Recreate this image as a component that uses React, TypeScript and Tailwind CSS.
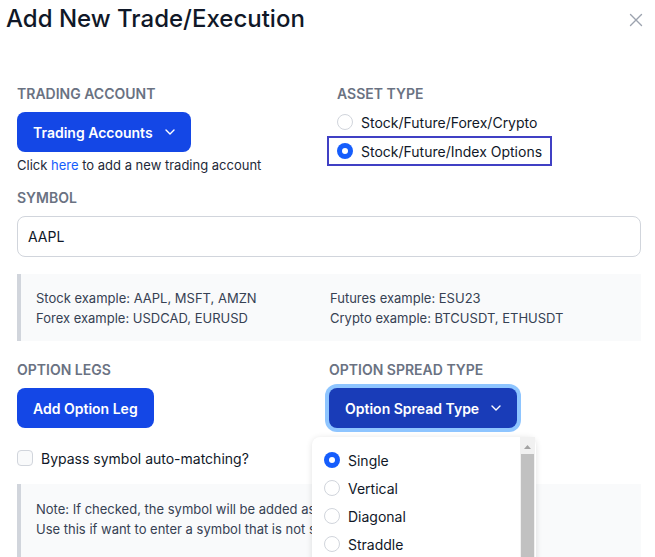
import type { ReactNode } from "react";

function Radio({ checked = false }: { checked?: boolean }) {
  return checked ? (
    <span className="flex h-4 w-4 shrink-0 items-center justify-center rounded-full bg-blue-600">
      <span className="h-[6px] w-[6px] rounded-full bg-white" />
    </span>
  ) : (
    <span className="h-4 w-4 shrink-0 rounded-full border border-gray-300 bg-white" />
  );
}

function Chevron() {
  return (
    <svg width="10" height="6" viewBox="0 0 10 6" fill="none" className="ml-3">
      <path d="M1 1l4 4 4-4" stroke="white" strokeWidth="1.4" strokeLinecap="round" strokeLinejoin="round" />
    </svg>
  );
}

function Label({ children }: { children: ReactNode }) {
  return <p className="text-[14px] font-semibold leading-5 text-gray-500">{children}</p>;
}

const spreads = ["Single", "Vertical", "Diagonal", "Straddle"];

export default function App() {
  return (
    <div
      className="relative h-[557px] w-[655px] overflow-hidden bg-white"
      style={{ fontFamily: "Inter, 'Liberation Sans', sans-serif" }}
    >
      <div className="flex items-start justify-between pl-[6px] pr-[12px] pt-[4px]">
        <h1 className="text-[24px] font-medium leading-[30px] text-gray-900">Add New Trade/Execution</h1>
        <svg width="14" height="14" viewBox="0 0 14 14" className="mt-[9px]">
          <path d="M1.5 1.5l11 11M12.5 1.5l-11 11" stroke="#9ca3af" strokeWidth="1.4" strokeLinecap="round" />
        </svg>
      </div>

      <div className="pl-[17px] pr-[14px]">
        <div className="mt-[50px] grid grid-cols-[320px_1fr]">
          <div>
            <Label>TRADING ACCOUNT</Label>
            <button className="mt-2 flex h-10 items-center rounded-lg bg-blue-700 px-4 text-[14px] font-semibold text-white">
              Trading Accounts
              <Chevron />
            </button>
            <p className="mt-[3px] text-[13px] leading-5 text-gray-800">
              Click <span className="text-blue-600">here</span> to add a new trading account
            </p>
          </div>
          <div>
            <Label>ASSET TYPE</Label>
            <div className="mt-1 flex h-7 items-center gap-2 text-[14px] text-gray-900">
              <Radio />
              Stock/Future/Forex/Crypto
            </div>
            <div className="-ml-[10px] -mt-px inline-flex h-[30px] items-center gap-2 border-2 border-[#4040c4] pl-2 pr-2 text-[14px] text-gray-900">
              <Radio checked />
              Stock/Future/Index Options
            </div>
          </div>
        </div>

        <div className="mt-[13px]">
          <Label>SYMBOL</Label>
          <div className="mt-2 flex h-[41px] items-center rounded-lg border border-gray-300 bg-white px-[10px] text-[14px] text-gray-900">
            AAPL
          </div>
        </div>

        <div className="mt-[17px] grid h-[67px] grid-cols-[294px_1fr] content-center border-l-4 border-gray-300 bg-gray-50 pl-[15px] text-[13px] leading-5 text-gray-700">
          <span>Stock example: AAPL, MSFT, AMZN</span>
          <span>Futures example: ESU23</span>
          <span>Forex example: USDCAD, EURUSD</span>
          <span>Crypto example: BTCUSDT, ETHUSDT</span>
        </div>

        <div className="mt-[19px] grid grid-cols-[312px_1fr]">
          <div>
            <Label>OPTION LEGS</Label>
            <button className="mt-2 flex h-10 items-center rounded-lg bg-blue-700 px-4 text-[14px] font-semibold text-white">
              Add Option Leg
            </button>
          </div>
          <div className="relative">
            <Label>OPTION SPREAD TYPE</Label>
            <button className="mt-2 flex h-10 items-center rounded-lg bg-blue-800 px-4 text-[14px] font-semibold text-white ring-4 ring-blue-300">
              Option Spread Type
              <Chevron />
            </button>
            <div className="absolute left-[-17px] top-[77px] z-10 flex h-[140px] w-[224px] rounded-lg bg-white shadow-[0_1px_6px_rgba(0,0,0,0.12)]">
              <ul className="flex-1 pl-3 pt-[9px]">
                {spreads.map((s, i) => (
                  <li key={s} className="flex h-7 items-center gap-2 text-[14px] text-gray-900">
                    <Radio checked={i === 0} />
                    {s}
                  </li>
                ))}
              </ul>
              <div className="mr-[1px] flex w-[15px] flex-col items-center bg-[#f1f1f1]">
                <svg width="7" height="4" viewBox="0 0 7 4" className="mt-[8px]">
                  <path d="M0 4L3.5 0 7 4z" fill="#a3a3a3" />
                </svg>
                <div className="mt-[5px] w-[13px] flex-1 bg-[#c1c1c1]" />
              </div>
            </div>
          </div>
        </div>

        <label className="mt-5 flex h-5 items-center gap-2 text-[14px] text-gray-900">
          <span className="h-4 w-4 rounded border border-gray-300 bg-gray-50" />
          Bypass symbol auto-matching?
        </label>

        <div className="mt-4 h-[80px] border-l-4 border-gray-300 bg-gray-50 pl-[15px] pt-[15px] text-[13px] leading-5 text-gray-700">
          <p>Note: If checked, the symbol will be added as is, without matching.</p>
          <p>Use this if want to enter a symbol that is not supported by search.</p>
        </div>
      </div>
    </div>
  );
}
